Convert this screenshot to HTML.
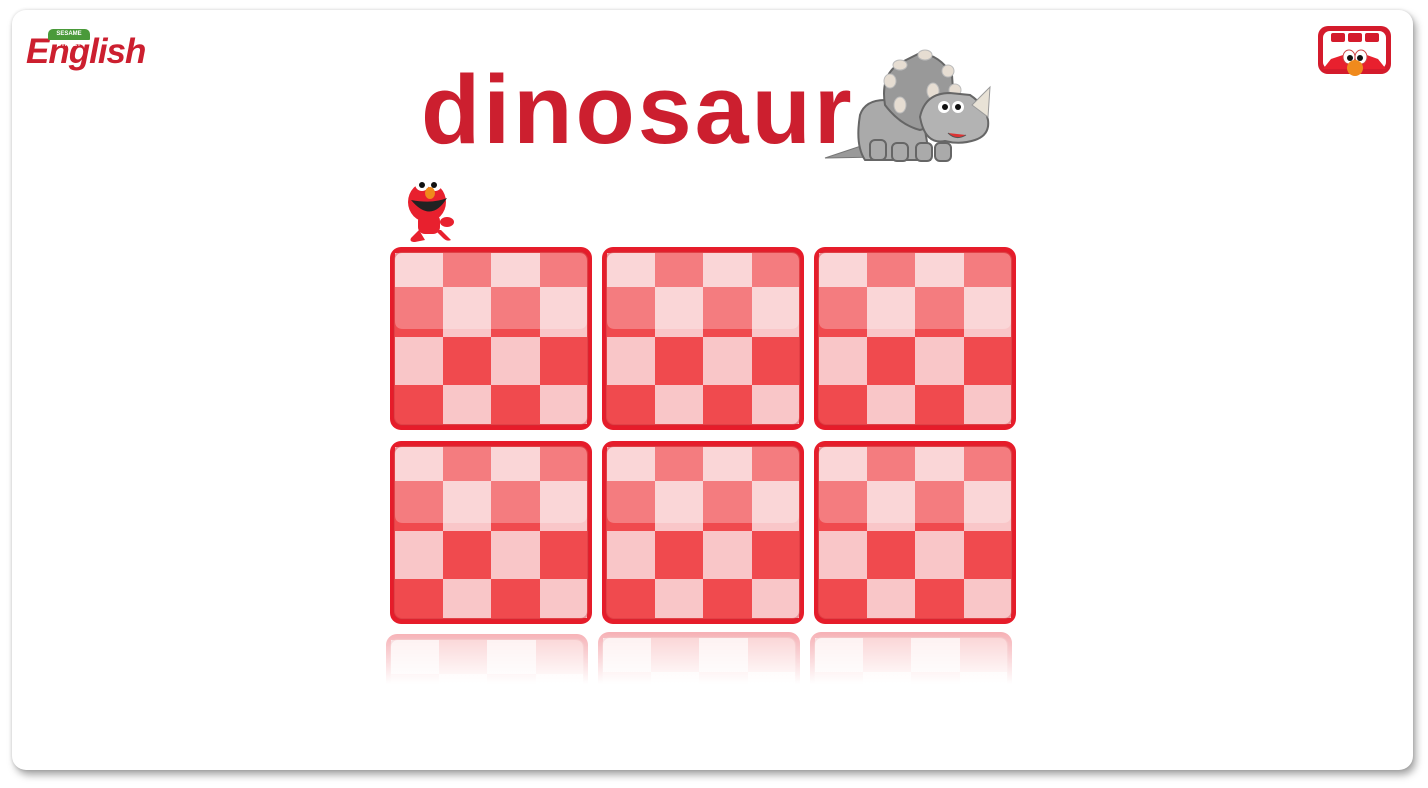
<!DOCTYPE html>
<html><head><meta charset="utf-8">
<style>
html,body{margin:0;padding:0;width:1428px;height:788px;background:#fff;overflow:hidden;font-family:"Liberation Sans",sans-serif}
.panel{position:absolute;left:12px;top:10px;width:1401px;height:760px;background:#fff;border-radius:14px;box-shadow:3px 5px 8px rgba(0,0,0,.35),0 0 3px rgba(0,0,0,.15)}
.title{position:absolute;left:421px;top:61px;font-size:97px;font-weight:bold;color:#cc1f2f;letter-spacing:3px;line-height:1}
.eng{position:absolute;left:26px;top:32px;font-size:35px;font-weight:bold;font-style:italic;color:#cc1f2f;letter-spacing:-1px}
.ss{position:absolute;left:48px;top:29px;width:42px;height:11px;background:#4a9a3a;border-radius:5px 5px 1px 1px;color:#fff;font-size:6px;font-weight:bold;text-align:center;line-height:11px;z-index:2}
</style></head><body>
<div class="panel"></div>
<div class="eng">English</div>
<div class="ss">SESAME STREET</div>

<svg style="position:absolute;left:1316px;top:24px" width="78" height="58" viewBox="0 0 78 58">
<rect x="2" y="2" width="73" height="48" rx="10" fill="#d41b2c"/>
<rect x="7" y="7" width="63" height="38" rx="7" fill="#fff"/>
<rect x="15" y="9" width="14" height="9" rx="2" fill="#d41b2c"/>
<rect x="32" y="9" width="14" height="9" rx="2" fill="#d41b2c"/>
<rect x="49" y="9" width="14" height="9" rx="2" fill="#d41b2c"/>
<path d="M7 45 L15 35 L30 30 L48 30 L62 35 L70 45 Z" fill="#e8202e"/>
<ellipse cx="33" cy="33" rx="6" ry="7" fill="#fff" stroke="#c44" stroke-width="1"/>
<ellipse cx="45" cy="33" rx="6" ry="7" fill="#fff" stroke="#c44" stroke-width="1"/>
<circle cx="34" cy="34" r="3" fill="#111"/><circle cx="44" cy="34" r="3" fill="#111"/>
<ellipse cx="39" cy="44" rx="8" ry="8" fill="#f08a1c"/>
</svg>

<div class="title">dinosaur</div>

<svg style="position:absolute;left:820px;top:45px" width="180" height="125" viewBox="-20 0 180 125">
<path d="M-15 113 L30 98 L40 112 Z" fill="#999" stroke="#777"/>
<path d="M20 70 Q25 55 45 55 L80 55 L90 115 L25 115 Q15 100 20 70 Z" fill="#aaa" stroke="#666" stroke-width="2"/>
<path d="M45 60 Q40 30 60 18 L80 8 Q100 10 112 30 L115 75 L80 85 Q60 80 45 60 Z" fill="#999" stroke="#666" stroke-width="2"/>
<g fill="#e6ddd2" stroke="#bbb"><ellipse cx="60" cy="20" rx="7" ry="5"/><ellipse cx="85" cy="10" rx="7" ry="5"/><ellipse cx="50" cy="36" rx="6" ry="7"/><ellipse cx="108" cy="26" rx="6" ry="6"/><ellipse cx="60" cy="60" rx="6" ry="8"/><ellipse cx="93" cy="46" rx="6" ry="8"/><ellipse cx="115" cy="45" rx="6" ry="6"/></g>
<g fill="#aaa" stroke="#666" stroke-width="2"><rect x="30" y="95" width="16" height="20" rx="5"/><rect x="52" y="98" width="16" height="18" rx="5"/><rect x="76" y="98" width="16" height="18" rx="5"/><rect x="95" y="98" width="16" height="18" rx="5"/></g>
<path d="M80 72 Q85 48 110 48 L130 50 Q145 60 148 75 Q150 90 135 95 Q120 100 105 96 Q85 100 80 72 Z" fill="#b3b3b3" stroke="#666" stroke-width="2"/>
<path d="M132 60 L150 42 L148 72 Z" fill="#e8e2d6" stroke="#999"/>
<circle cx="104" cy="62" r="6" fill="#fff"/><circle cx="118" cy="62" r="6" fill="#fff"/>
<circle cx="105" cy="62" r="3" fill="#111"/><circle cx="118" cy="62" r="3" fill="#111"/>
<path d="M108 88 Q116 96 126 90" fill="#d33" stroke="#555"/>
</svg>

<svg style="position:absolute;left:403px;top:172px" width="56" height="74" viewBox="0 0 56 74">
<ellipse cx="24" cy="30" rx="19" ry="20" fill="#e8202e"/>
<rect x="15" y="42" width="22" height="20" rx="7" fill="#e8202e"/>
<path d="M16 58 L8 66 Q6 70 12 70 L22 68 Z M32 58 L40 66 Q44 70 48 68 L38 58 Z" fill="#e8202e"/>
<ellipse cx="44" cy="50" rx="7" ry="5" fill="#e8202e"/>
<circle cx="19" cy="12" r="7" fill="#fff"/><circle cx="32" cy="12" r="7" fill="#fff"/>
<circle cx="19" cy="13" r="3" fill="#111"/><circle cx="31" cy="13" r="3" fill="#111"/>
<ellipse cx="27" cy="21" rx="5" ry="6" fill="#f08a1c"/>
<path d="M8 28 Q28 52 44 26 Q30 32 8 28 Z" fill="#222"/>
</svg>

<svg style="position:absolute;left:0;top:0" width="1428" height="788">
<defs>
<g id="chk">
<rect x="0" y="0" width="202" height="183" rx="11" fill="#e61c2a"/>
<rect x="4" y="5" width="194" height="173" rx="8" fill="#f04a4e"/>
<rect x="5" y="6" width="48" height="34" fill="#f9c6c8"/><rect x="101" y="6" width="49" height="34" fill="#f9c6c8"/>
<rect x="53" y="40" width="48" height="50" fill="#f9c6c8"/><rect x="150" y="40" width="47" height="50" fill="#f9c6c8"/>
<rect x="5" y="90" width="48" height="48" fill="#f9c6c8"/><rect x="101" y="90" width="49" height="48" fill="#f9c6c8"/>
<rect x="53" y="138" width="48" height="39" fill="#f9c6c8"/><rect x="150" y="138" width="47" height="39" fill="#f9c6c8"/>
<path d="M5 14 Q5 6 13 6 L189 6 Q197 6 197 14 L197 74 Q197 82 189 82 L13 82 Q5 82 5 74 Z" fill="#fff" opacity=".28"/>
<rect x="4" y="5" width="194" height="173" rx="8" fill="none" stroke="#c9303a" stroke-opacity=".35" stroke-width="2"/>
</g>
<linearGradient id="fade" x1="0" y1="0" x2="0" y2="1">
<stop offset="0" stop-color="#fff" stop-opacity="0.35"/><stop offset="1" stop-color="#fff" stop-opacity="1"/>
</linearGradient>
<clipPath id="rc"><rect x="380" y="630" width="640" height="54"/></clipPath>
</defs>
<use href="#chk" x="390" y="247"/>
<use href="#chk" x="602" y="247"/>
<use href="#chk" x="814" y="247"/>
<use href="#chk" x="390" y="441"/>
<use href="#chk" x="602" y="441"/>
<use href="#chk" x="814" y="441"/>
<g clip-path="url(#rc)">
<g opacity=".55">
<use href="#chk" x="386" y="634"/>
<use href="#chk" x="598" y="632"/>
<use href="#chk" x="810" y="632"/>
</g>
<rect x="380" y="630" width="640" height="54" fill="url(#fade)"/>
</g>
</svg>
</body></html>
